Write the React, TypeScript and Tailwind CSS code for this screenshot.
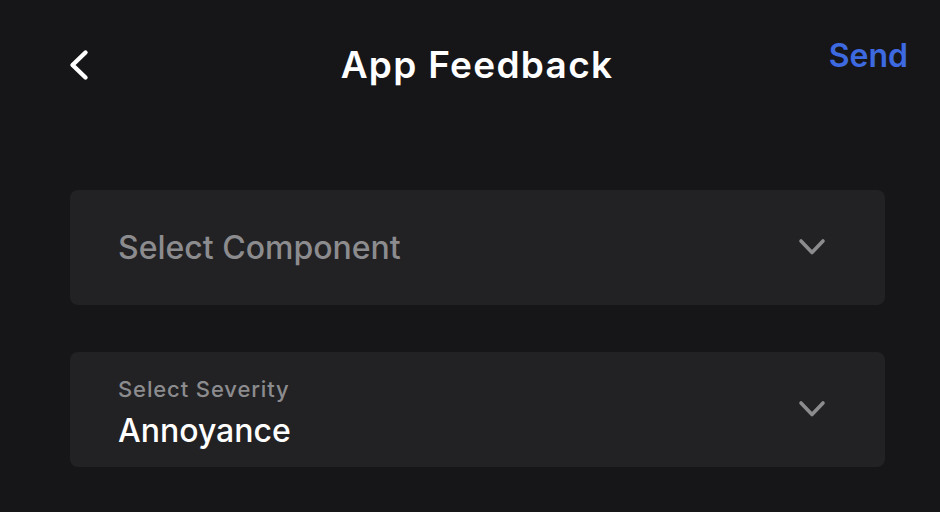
function Chevron() {
  return (
    <svg width="28" height="19" viewBox="0 0 28 19" fill="none" className="text-[#8c8c8f]">
      <polyline points="3,3 14,14.5 25,3" stroke="currentColor" strokeWidth="3.6" strokeLinecap="round" strokeLinejoin="round" />
    </svg>
  )
}

function SelectCard({ label, value }: { label?: string; value: string }) {
  return (
    <div className="flex items-center justify-between rounded-lg bg-[#222224] h-[115px] pl-12 pr-[59px]">
      {label ? (
        <div className="flex flex-col pt-[6px]">
          <span className="text-[22px] leading-7 font-medium tracking-[0.04em] text-[#8c8c8f]">{label}</span>
          <span className="mt-2 text-[32px] leading-10 font-medium text-white">{value}</span>
        </div>
      ) : (
        <span className="text-[32px] font-medium text-[#8c8c8f]">{value}</span>
      )}
      <Chevron />
    </div>
  )
}

export default function App() {
  return (
    <div
      className="w-[940px] h-[512px] bg-[#161618] overflow-hidden"
      style={{ fontFamily: 'Inter, "Noto Sans", sans-serif' }}
    >
      <div className="relative flex items-center justify-center h-[132px] pb-[2px] pl-[14px]">
        <svg width="24" height="36" viewBox="0 0 24 36" fill="none" className="absolute left-[67px] top-[47px] text-white">
          <polyline points="18.5,5.5 5.5,18 18.5,30.5" stroke="currentColor" strokeWidth="4.4" strokeLinecap="round" strokeLinejoin="round" />
        </svg>
        <h1 className="text-[37px] font-semibold tracking-[0.035em] text-white">App Feedback</h1>
        <button className="absolute right-[32px] top-[32px] text-[32px] font-semibold text-[#3e6ae1]">Send</button>
      </div>
      <div className="flex flex-col gap-[47px] px-[70px] pr-[55px] pt-[58px]">
        <SelectCard value="Select Component" />
        <SelectCard label="Select Severity" value="Annoyance" />
      </div>
    </div>
  )
}
